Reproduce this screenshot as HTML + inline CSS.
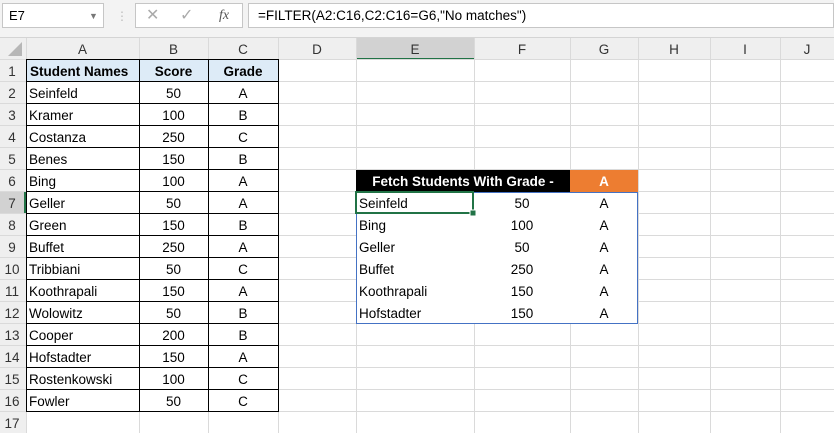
<!DOCTYPE html><html><head><style>
body{margin:0;width:834px;height:433px;overflow:hidden;background:#fff;font-family:"Liberation Sans",sans-serif;position:relative}
.a{position:absolute;box-sizing:border-box}
.t{position:absolute;font-size:13.5px;line-height:22px;white-space:nowrap;margin-top:1px}
</style></head><body>
<div class="a" style="left:0;top:0;width:834px;height:38px;background:#f3f3f3;border-bottom:1px solid #d4d4d4"></div>
<div class="a" style="left:2px;top:3px;width:102px;height:25px;background:#fff;border:1px solid #c6c6c6"></div>
<div class="t" style="left:9px;top:4px;font-size:13px">E7</div>
<div class="t" style="left:89px;top:4px;font-size:9px;color:#777">▼</div>
<div class="t" style="left:116px;top:4px;color:#bbb;font-size:12px">⋮</div>
<div class="a" style="left:135px;top:3px;width:108px;height:25px;background:#fff;border:1px solid #c6c6c6"></div>
<div class="t" style="left:146px;top:4px;color:#aaa;font-size:16px">✕</div>
<div class="t" style="left:180px;top:4px;color:#aaa;font-size:16px">✓</div>
<div class="t" style="left:219px;top:4px;color:#555;font-style:italic;font-family:'Liberation Serif',serif;font-size:14px">fx</div>
<div class="a" style="left:248px;top:3px;width:586px;height:25px;background:#fff;border:1px solid #c6c6c6"></div>
<div class="t" style="left:258px;top:4px;font-size:13.5px">=FILTER(A2:C16,C2:C16=G6,"No matches")</div>
<svg class="a" style="left:0;top:38px" width="834" height="395">
<rect x="0" y="0" width="834" height="22" fill="#efefef"/>
<rect x="0" y="0" width="26" height="395" fill="#efefef"/>
<rect x="356" y="0" width="118" height="22" fill="#d2d2d2"/>
<rect x="356" y="20" width="118" height="2" fill="#217346"/>
<rect x="0" y="154" width="26" height="22" fill="#d2d2d2"/>
<rect x="24" y="154" width="2" height="22" fill="#217346"/>
<polygon points="22,4 22,18 8,18" fill="#b7b7b7"/>
<g stroke="#dadada" stroke-width="1">
<line x1="26.5" y1="0" x2="26.5" y2="395"/><line x1="139.5" y1="0" x2="139.5" y2="395"/><line x1="208.5" y1="0" x2="208.5" y2="395"/><line x1="278.5" y1="0" x2="278.5" y2="395"/><line x1="356.5" y1="0" x2="356.5" y2="395"/><line x1="474.5" y1="0" x2="474.5" y2="395"/><line x1="570.5" y1="0" x2="570.5" y2="395"/><line x1="638.5" y1="0" x2="638.5" y2="395"/><line x1="710.5" y1="0" x2="710.5" y2="395"/><line x1="780.5" y1="0" x2="780.5" y2="395"/>
<line x1="0" y1="21.5" x2="834" y2="21.5"/><line x1="0" y1="43.5" x2="834" y2="43.5"/><line x1="0" y1="65.5" x2="834" y2="65.5"/><line x1="0" y1="87.5" x2="834" y2="87.5"/><line x1="0" y1="109.5" x2="834" y2="109.5"/><line x1="0" y1="131.5" x2="834" y2="131.5"/><line x1="0" y1="153.5" x2="834" y2="153.5"/><line x1="0" y1="175.5" x2="834" y2="175.5"/><line x1="0" y1="197.5" x2="834" y2="197.5"/><line x1="0" y1="219.5" x2="834" y2="219.5"/><line x1="0" y1="241.5" x2="834" y2="241.5"/><line x1="0" y1="263.5" x2="834" y2="263.5"/><line x1="0" y1="285.5" x2="834" y2="285.5"/><line x1="0" y1="307.5" x2="834" y2="307.5"/><line x1="0" y1="329.5" x2="834" y2="329.5"/><line x1="0" y1="351.5" x2="834" y2="351.5"/><line x1="0" y1="373.5" x2="834" y2="373.5"/>
</g>
<rect x="26" y="22" width="252" height="22" fill="#ddebf7"/>
<rect x="356" y="132" width="214" height="22" fill="#000"/>
<rect x="570" y="132" width="68" height="22" fill="#ed7d31"/>
<g stroke="#000" stroke-width="1" fill="none">
<rect x="26.5" y="21.5" width="252" height="352"/>
<line x1="139.5" y1="22" x2="139.5" y2="374"/><line x1="208.5" y1="22" x2="208.5" y2="374"/>
<line x1="26" y1="43.5" x2="278" y2="43.5"/><line x1="26" y1="65.5" x2="278" y2="65.5"/><line x1="26" y1="87.5" x2="278" y2="87.5"/><line x1="26" y1="109.5" x2="278" y2="109.5"/><line x1="26" y1="131.5" x2="278" y2="131.5"/><line x1="26" y1="153.5" x2="278" y2="153.5"/><line x1="26" y1="175.5" x2="278" y2="175.5"/><line x1="26" y1="197.5" x2="278" y2="197.5"/><line x1="26" y1="219.5" x2="278" y2="219.5"/><line x1="26" y1="241.5" x2="278" y2="241.5"/><line x1="26" y1="263.5" x2="278" y2="263.5"/><line x1="26" y1="285.5" x2="278" y2="285.5"/><line x1="26" y1="307.5" x2="278" y2="307.5"/><line x1="26" y1="329.5" x2="278" y2="329.5"/><line x1="26" y1="351.5" x2="278" y2="351.5"/>
</g>
<rect x="356" y="154" width="118" height="22" fill="#fff"/>
<rect x="474" y="154" width="164" height="132" fill="#fff"/>
<rect x="356" y="176" width="118" height="110" fill="#fff"/>
<rect x="356.5" y="154.5" width="281" height="131" fill="none" stroke="#4472c4"/>
<rect x="356" y="154" width="117" height="21" fill="none" stroke="#217346" stroke-width="2"/>
<rect x="470" y="172" width="6" height="6" fill="#217346" stroke="#fff"/>
</svg>
<div id="c"></div>
<script>
var cols=[["A",26,113],["B",139,69],["C",208,70],["D",278,78],["E",356,118],["F",474,96],["G",570,68],["H",638,72],["I",710,70],["J",780,54]];
var h="";
cols.forEach(function(c){h+='<div class="t" style="left:'+c[1]+'px;top:38px;width:'+c[2]+'px;text-align:center;color:#333">'+c[0]+'</div>'});
for(var r=1;r<=17;r++){h+='<div class="t" style="left:0;top:'+(60+22*(r-1))+'px;width:24px;text-align:center;color:#333">'+r+'</div>'}
var d=[["Seinfeld",50,"A"],["Kramer",100,"B"],["Costanza",250,"C"],["Benes",150,"B"],["Bing",100,"A"],["Geller",50,"A"],["Green",150,"B"],["Buffet",250,"A"],["Tribbiani",50,"C"],["Koothrapali",150,"A"],["Wolowitz",50,"B"],["Cooper",200,"B"],["Hofstadter",150,"A"],["Rostenkowski",100,"C"],["Fowler",50,"C"]];
h+='<div class="t" style="left:30px;top:60px;font-weight:bold">Student Names</div><div class="t" style="left:139px;top:60px;width:69px;text-align:center;font-weight:bold">Score</div><div class="t" style="left:208px;top:60px;width:70px;text-align:center;font-weight:bold">Grade</div>';
d.forEach(function(x,i){var y=82+22*i;h+='<div class="t" style="left:29px;top:'+y+'px">'+x[0]+'</div><div class="t" style="left:139px;top:'+y+'px;width:69px;text-align:center">'+x[1]+'</div><div class="t" style="left:208px;top:'+y+'px;width:70px;text-align:center">'+x[2]+'</div>'});
h+='<div class="t" style="left:356px;top:170px;width:214px;text-align:center;color:#fff;font-weight:bold">Fetch Students With Grade -</div><div class="t" style="left:570px;top:170px;width:68px;text-align:center;color:#fff;font-weight:bold">A</div>';
var f=[["Seinfeld",50],["Bing",100],["Geller",50],["Buffet",250],["Koothrapali",150],["Hofstadter",150]];
f.forEach(function(x,i){var y=192+22*i;h+='<div class="t" style="left:359px;top:'+y+'px">'+x[0]+'</div><div class="t" style="left:474px;top:'+y+'px;width:96px;text-align:center">'+x[1]+'</div><div class="t" style="left:570px;top:'+y+'px;width:68px;text-align:center">A</div>'});
document.getElementById("c").innerHTML=h;
</script>
</body></html>
